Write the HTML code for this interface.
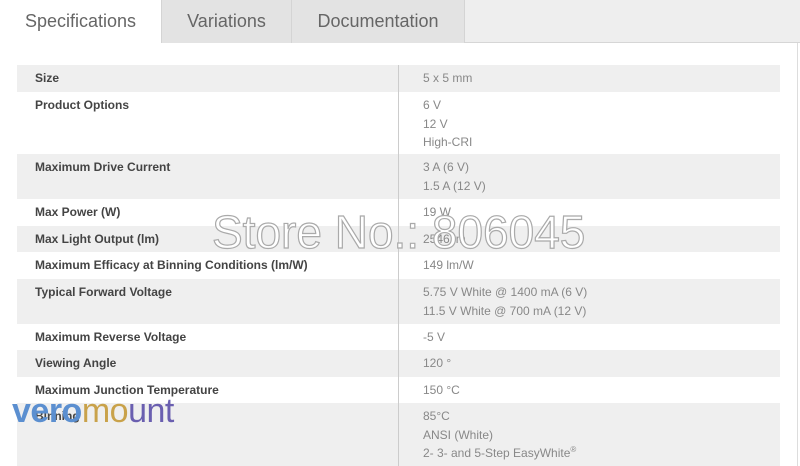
<!DOCTYPE html>
<html><head><meta charset="utf-8"><style>
*{margin:0;padding:0;box-sizing:border-box}
body{width:800px;height:466px;background:#fff;font-family:"Liberation Sans",Arial,sans-serif;position:relative;overflow:hidden}
.tabbar{position:absolute;left:0;top:0;width:800px;height:43px;background:#eeeeee;border-bottom:1px solid #d6d6d6}
.tab{position:absolute;top:0;height:43px;font-size:18px;color:#666;text-align:center;line-height:42px}
.t1{left:0;width:161px;background:#fff;height:44px}
.t2{left:161px;width:131px;background:#e3e3e3;border-left:1px solid #d4d4d4;border-right:1px solid #d4d4d4}
.t3{left:292px;width:173px;background:#e3e3e3;border-right:1px solid #d4d4d4}
.panel{position:absolute;left:0;top:43px;width:798px;height:423px;border-right:1px solid #ddd}
.row{position:absolute;left:17px;width:763px;font-size:12px}
.g{background:#efefef}
.lab{position:absolute;left:18px;top:4px;font-weight:bold;color:#444;line-height:18px}
.val{position:absolute;left:406px;top:4px;color:#888;line-height:18.5px}
sup{position:relative;top:-5px;font-size:8px;vertical-align:baseline;line-height:0}
.div{position:absolute;left:398px;top:65px;width:1px;height:401px;background:#ccc}
.wm{position:absolute;left:212px;top:205px;font-size:46px;color:#fff;-webkit-text-stroke:1.2px #aaa;white-space:nowrap}
.logo{position:absolute;left:12px;top:392px;font-size:34px;white-space:nowrap;letter-spacing:-0.5px}
</style></head><body>
<div class="tabbar"></div>
<div class="tab t1">Specifications</div>
<div class="tab t2">Variations</div>
<div class="tab t3">Documentation</div>
<div class="panel"></div>

<div class="row g" style="top:65px;height:27px"><span class="lab">Size</span><span class="val">5 x 5 mm</span></div>
<div class="row" style="top:92px;height:62px"><span class="lab">Product Options</span><span class="val">6 V<br>12 V<br>High-CRI</span></div>
<div class="row g" style="top:154px;height:45px"><span class="lab">Maximum Drive Current</span><span class="val">3 A (6 V)<br>1.5 A (12 V)</span></div>
<div class="row" style="top:199px;height:27px"><span class="lab">Max Power (W)</span><span class="val">19 W</span></div>
<div class="row g" style="top:226px;height:26px"><span class="lab">Max Light Output (lm)</span><span class="val">2546 lm</span></div>
<div class="row" style="top:252px;height:27px"><span class="lab">Maximum Efficacy at Binning Conditions (lm/W)</span><span class="val">149 lm/W</span></div>
<div class="row g" style="top:279px;height:45px"><span class="lab">Typical Forward Voltage</span><span class="val">5.75 V White @ 1400 mA (6 V)<br>11.5 V White @ 700 mA (12 V)</span></div>
<div class="row" style="top:324px;height:26px"><span class="lab">Maximum Reverse Voltage</span><span class="val">-5 V</span></div>
<div class="row g" style="top:350px;height:27px"><span class="lab">Viewing Angle</span><span class="val">120 °</span></div>
<div class="row" style="top:377px;height:26px"><span class="lab">Maximum Junction Temperature</span><span class="val">150 °C</span></div>
<div class="row g" style="top:403px;height:63px"><span class="lab">Binning</span><span class="val">85°C<br>ANSI (White)<br>2- 3- and 5-Step EasyWhite<sup>®</sup></span></div>
<div class="div"></div>

<div class="wm">Store No.: 806045</div>
<div class="logo"><b style="color:#5b8fd0">vero</b><span style="color:#c9a24a">mo</span><span style="color:#6a5fb0">unt</span></div>
</body></html>
